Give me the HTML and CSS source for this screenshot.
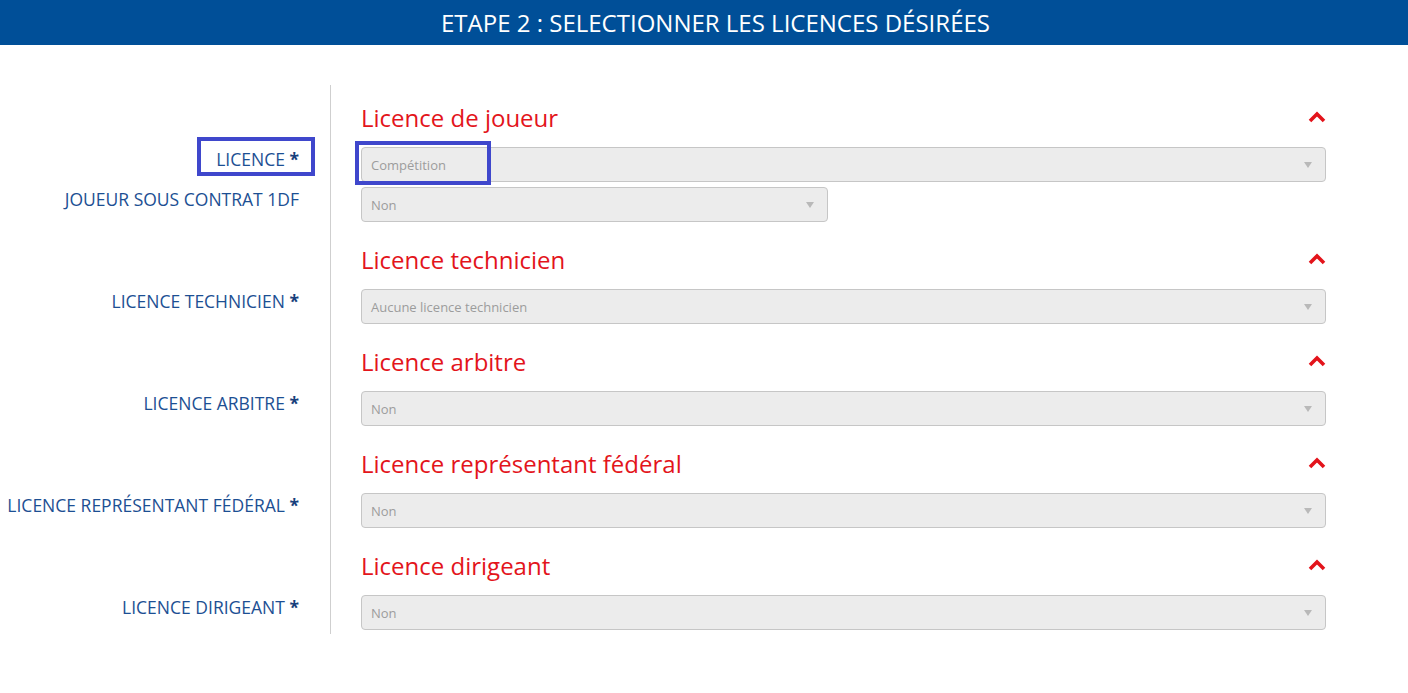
FILE: index.html
```html
<!DOCTYPE html>
<html lang="fr">
<head>
<meta charset="utf-8">
<title>Etape 2</title>
<link rel="stylesheet" href="styles.css">
</head>
<body>
<header class="topbar">ETAPE 2 : SELECTIONNER LES LICENCES DÉSIRÉES</header>

<main class="form">
  <div class="row first">
    <div class="label-col"></div>
    <div class="field-col head-cell">
      <h2 class="section-title">Licence de joueur</h2>
      <svg class="chev" width="18" height="12" viewBox="0 0 18 12"><polyline points="2,10 9,3 16,10" fill="none" stroke="#e3141b" stroke-width="3.6"/></svg>
    </div>
  </div>
  <div class="row">
    <div class="label-col"><span class="label">LICENCE <b>*</b></span></div>
    <div class="field-col pair"><div class="select"><span>Compétition</span><i class="arrow"></i></div></div>
  </div>
  <div class="row">
    <div class="label-col"><span class="label">JOUEUR SOUS CONTRAT 1DF</span></div>
    <div class="field-col"><div class="select narrow"><span>Non</span><i class="arrow"></i></div></div>
  </div>

  <div class="row">
    <div class="label-col"></div>
    <div class="field-col head-cell">
      <h2 class="section-title">Licence technicien</h2>
      <svg class="chev" width="18" height="12" viewBox="0 0 18 12"><polyline points="2,10 9,3 16,10" fill="none" stroke="#e3141b" stroke-width="3.6"/></svg>
    </div>
  </div>
  <div class="row">
    <div class="label-col"><span class="label">LICENCE TECHNICIEN <b>*</b></span></div>
    <div class="field-col"><div class="select"><span>Aucune licence technicien</span><i class="arrow"></i></div></div>
  </div>

  <div class="row">
    <div class="label-col"></div>
    <div class="field-col head-cell">
      <h2 class="section-title">Licence arbitre</h2>
      <svg class="chev" width="18" height="12" viewBox="0 0 18 12"><polyline points="2,10 9,3 16,10" fill="none" stroke="#e3141b" stroke-width="3.6"/></svg>
    </div>
  </div>
  <div class="row">
    <div class="label-col"><span class="label">LICENCE ARBITRE <b>*</b></span></div>
    <div class="field-col"><div class="select"><span>Non</span><i class="arrow"></i></div></div>
  </div>

  <div class="row">
    <div class="label-col"></div>
    <div class="field-col head-cell">
      <h2 class="section-title">Licence représentant fédéral</h2>
      <svg class="chev" width="18" height="12" viewBox="0 0 18 12"><polyline points="2,10 9,3 16,10" fill="none" stroke="#e3141b" stroke-width="3.6"/></svg>
    </div>
  </div>
  <div class="row">
    <div class="label-col"><span class="label">LICENCE REPRÉSENTANT FÉDÉRAL <b>*</b></span></div>
    <div class="field-col"><div class="select"><span>Non</span><i class="arrow"></i></div></div>
  </div>

  <div class="row">
    <div class="label-col"></div>
    <div class="field-col head-cell">
      <h2 class="section-title">Licence dirigeant</h2>
      <svg class="chev" width="18" height="12" viewBox="0 0 18 12"><polyline points="2,10 9,3 16,10" fill="none" stroke="#e3141b" stroke-width="3.6"/></svg>
    </div>
  </div>
  <div class="row last">
    <div class="label-col"><span class="label">LICENCE DIRIGEANT <b>*</b></span></div>
    <div class="field-col"><div class="select"><span>Non</span><i class="arrow"></i></div></div>
  </div>
</main>

<div class="mark mark-label"></div>
<div class="mark mark-select"></div>
</body>
</html>
```

FILE: styles.css
```css
* { box-sizing: border-box; }

body {
  margin: 0;
  background: #ffffff;
  font-family: "Open Sans", "Noto Sans", sans-serif;
  position: relative;
}

.topbar {
  height: 45px;
  background: #004f98;
  color: #ffffff;
  font-size: 24px;
  line-height: 45px;
  text-align: center;
  padding-left: 23px;
}

.form {
  margin-top: 40px;
  padding-right: 82px;
}

.row {
  display: flex;
}

.label-col {
  width: 331px;
  flex: 0 0 331px;
  border-right: 1px solid #cfcfcf;
  padding-right: 31px;
  text-align: right;
}

.label {
  display: block;
  font-size: 17.5px;
  line-height: 24px;
  color: #1c4f93;
  white-space: nowrap;
}

.label b {
  color: #173f7c;
  font-weight: 700;
}

.field-col {
  flex: 1;
  padding-left: 30px;
}

.head-cell {
  display: flex;
  align-items: center;
  justify-content: space-between;
  padding-top: 20px;
  padding-bottom: 13px;
}

.row.first .head-cell { padding-top: 15px; }
.row.last .field-col { padding-bottom: 4px; }

.pair { padding-bottom: 5px; }

.section-title {
  margin: 0;
  font-size: 24px;
  font-weight: 400;
  line-height: 36px;
  color: #e3141b;
}

.chev {
  display: block;
  margin-top: -3px;
}

.head-cell { padding-bottom: 11px; }

.select {
  height: 35px;
  background: #ececec;
  border: 1px solid #c6c6c6;
  border-radius: 4px;
  display: flex;
  align-items: center;
  justify-content: space-between;
  padding: 0 13px 0 9px;
  font-size: 13px;
  color: #9c9c9c;
}

.select.narrow { width: 467px; }

.arrow {
  width: 0;
  height: 0;
  border-left: 4px solid transparent;
  border-right: 4px solid transparent;
  border-top: 6px solid #b9b9b9;
  margin-top: 1px;
}

.mark {
  position: absolute;
  border: 4px solid #3f47cc;
}

.mark-label {
  left: 197px;
  top: 137px;
  width: 118px;
  height: 39px;
}

.mark-select {
  left: 355px;
  top: 141px;
  width: 136px;
  height: 44px;
}
```
